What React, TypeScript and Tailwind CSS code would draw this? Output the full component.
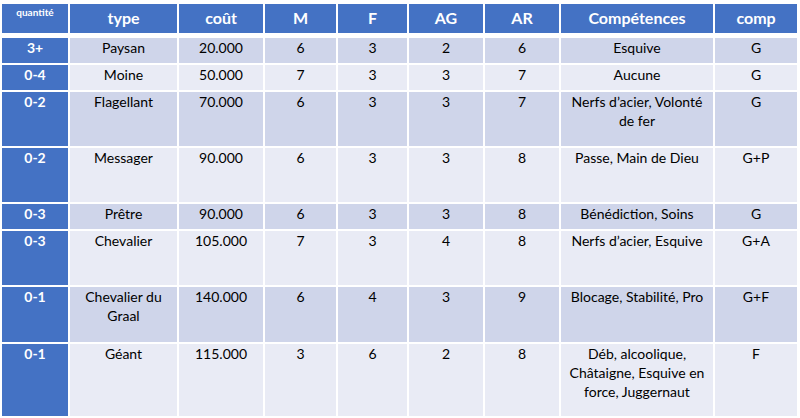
const rows = [
  { q: "3+", type: ["Paysan"], cout: "20.000", m: 6, f: 3, ag: 2, ar: 6, comp: ["Esquive"], c: "G", h: "h-[25px]" },
  { q: "0-4", type: ["Moine"], cout: "50.000", m: 7, f: 3, ag: 3, ar: 7, comp: ["Aucune"], c: "G", h: "h-[25px]" },
  { q: "0-2", type: ["Flagellant"], cout: "70.000", m: 6, f: 3, ag: 3, ar: 7, comp: ["Nerfs d’acier, Volonté", "de fer"], c: "G", h: "h-[54px]" },
  { q: "0-2", type: ["Messager"], cout: "90.000", m: 6, f: 3, ag: 3, ar: 8, comp: ["Passe, Main de Dieu"], c: "G+P", h: "h-[54px]" },
  { q: "0-3", type: ["Prêtre"], cout: "90.000", m: 6, f: 3, ag: 3, ar: 8, comp: ["Bénédiction, Soins"], c: "G", h: "h-[25px]" },
  { q: "0-3", type: ["Chevalier"], cout: "105.000", m: 7, f: 3, ag: 4, ar: 8, comp: ["Nerfs d’acier, Esquive"], c: "G+A", h: "h-[54px]" },
  { q: "0-1", type: ["Chevalier du", "Graal"], cout: "140.000", m: 6, f: 4, ag: 3, ar: 9, comp: ["Blocage, Stabilité, Pro"], c: "G+F", h: "h-[55px]" },
  { q: "0-1", type: ["Géant"], cout: "115.000", m: 3, f: 6, ag: 2, ar: 8, comp: ["Déb, alcoolique,", "Châtaigne, Esquive en", "force, Juggernaut"], c: "F", h: "h-[72px]" },
];

const cols = "grid grid-cols-[66px_107px_84px_71px_69px_74px_74px_152px_82px] gap-x-[2px]";

const Lines = ({ items }: { items: string[] }) => (
  <>
    {items.map((t, i) => (
      <div key={i}>{t}</div>
    ))}
  </>
);

const App = () => {
  return (
    <div className="w-[800px] h-[418px] bg-white pt-[4px] pl-[2px] font-['Lato',sans-serif]">
      <div className={`${cols} h-[29px] text-white font-bold mb-[5px]`}>
        <div className="bg-[#4472c4] text-[10px] text-center pt-[2px] leading-[12px]">quantité</div>
        {["type", "coût", "M", "F", "AG", "AR", "Compétences", "comp"].map((h) => (
          <div key={h} className="bg-[#4472c4] text-[16px] text-center pt-[4px] leading-[20px]">
            {h}
          </div>
        ))}
      </div>

      <div className="flex flex-col gap-y-[2px]">
        {rows.map((r, i) => {
          const bg = i % 2 === 0 ? "bg-[#cfd5ea]" : "bg-[#e9ebf5]";
          const cell = `${bg} text-center text-[14px] leading-[19px] text-black`;
          return (
            <div key={i} className={`${cols} ${r.h}`}>
              <div className="bg-[#4472c4] text-white font-bold text-[14px] leading-[19px] text-center">
                {r.q}
              </div>
              <div className={cell}>
                <Lines items={r.type} />
              </div>
              <div className={cell}>{r.cout}</div>
              <div className={cell}>{r.m}</div>
              <div className={cell}>{r.f}</div>
              <div className={cell}>{r.ag}</div>
              <div className={cell}>{r.ar}</div>
              <div className={cell}>
                <Lines items={r.comp} />
              </div>
              <div className={cell}>{r.c}</div>
            </div>
          );
        })}
      </div>
    </div>
  );
};

export default App;
